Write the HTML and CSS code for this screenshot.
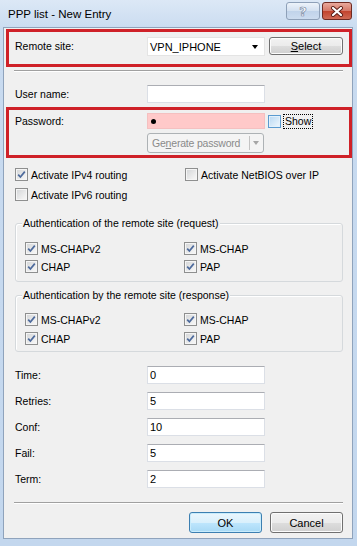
FILE: index.html
```html
<!DOCTYPE html>
<html lang="en">
<head>
    <meta charset="UTF-8">
    <meta name="viewport" content="width=device-width, initial-scale=1.0">
    <title>PPP list - New Entry</title>
    <link rel="stylesheet" href="styles.css">
</head>
<body>
<div class="window">
    <div class="titlebar">
        <span class="title">PPP list - New Entry</span>
        <div class="caption">
            <span class="cap-btn help">?</span>
            <span class="cap-btn close">
                <svg width="14" height="11" viewBox="0 0 14 11">
                    <path d="M3 2 L11 9 M11 2 L3 9" stroke="#5a1d16" stroke-width="4" stroke-linecap="round"/>
                    <path d="M3 2 L11 9 M11 2 L3 9" stroke="#fff" stroke-width="2.2" stroke-linecap="round"/>
                </svg>
            </span>
        </div>
    </div>

    <div class="client">
        <div class="mark mark-site">
            <div class="row">
                <label class="lbl">Remote site:</label>
                <div class="combo"><span>VPN_IPHONE</span><span class="arrow"></span></div>
                <button class="btn btn-select"><u>S</u>elect</button>
            </div>
        </div>

        <div class="sep sep-top"></div>

        <div class="row field user">
            <label class="lbl">User name:</label>
            <div class="input"></div>
        </div>

        <div class="mark mark-pw">
            <div class="row pw">
                <label class="lbl">Password:</label>
                <div class="input input-pw"><span class="dot"></span></div>
                <span class="cb cb-hot"></span>
                <span class="focus">Show</span>
            </div>
            <div class="gen">
                <span class="gen-text">Ge<u>n</u>erate password</span>
                <span class="gen-split"></span>
                <span class="arrow arrow-grey"></span>
            </div>
        </div>

        <div class="checks">
            <div class="chk"><span class="cb on"><svg width="11" height="11" viewBox="0 0 11 11"><path d="M2.2 5.6 L4.4 8 L8.8 2.6" fill="none" stroke="#4d6a9c" stroke-width="1.7"/></svg></span>Activate IPv4 routing</div>
            <div class="chk"><span class="cb"></span>Activate NetBIOS over IP</div>
            <div class="chk"><span class="cb"></span>Activate IPv6 routing</div>
        </div>

        <div class="group group-req">
            <div class="group-title">Authentication of the remote site (request)</div>
            <div class="checks group-checks">
                <div class="chk"><span class="cb on"><svg width="11" height="11" viewBox="0 0 11 11"><path d="M2.2 5.6 L4.4 8 L8.8 2.6" fill="none" stroke="#4d6a9c" stroke-width="1.7"/></svg></span>MS-CHAPv2</div>
                <div class="chk"><span class="cb on"><svg width="11" height="11" viewBox="0 0 11 11"><path d="M2.2 5.6 L4.4 8 L8.8 2.6" fill="none" stroke="#4d6a9c" stroke-width="1.7"/></svg></span>MS-CHAP</div>
                <div class="chk"><span class="cb on"><svg width="11" height="11" viewBox="0 0 11 11"><path d="M2.2 5.6 L4.4 8 L8.8 2.6" fill="none" stroke="#4d6a9c" stroke-width="1.7"/></svg></span>CHAP</div>
                <div class="chk"><span class="cb on"><svg width="11" height="11" viewBox="0 0 11 11"><path d="M2.2 5.6 L4.4 8 L8.8 2.6" fill="none" stroke="#4d6a9c" stroke-width="1.7"/></svg></span>PAP</div>
            </div>
        </div>

        <div class="group group-resp">
            <div class="group-title">Authentication by the remote site (response)</div>
            <div class="checks group-checks">
                <div class="chk"><span class="cb on"><svg width="11" height="11" viewBox="0 0 11 11"><path d="M2.2 5.6 L4.4 8 L8.8 2.6" fill="none" stroke="#4d6a9c" stroke-width="1.7"/></svg></span>MS-CHAPv2</div>
                <div class="chk"><span class="cb on"><svg width="11" height="11" viewBox="0 0 11 11"><path d="M2.2 5.6 L4.4 8 L8.8 2.6" fill="none" stroke="#4d6a9c" stroke-width="1.7"/></svg></span>MS-CHAP</div>
                <div class="chk"><span class="cb on"><svg width="11" height="11" viewBox="0 0 11 11"><path d="M2.2 5.6 L4.4 8 L8.8 2.6" fill="none" stroke="#4d6a9c" stroke-width="1.7"/></svg></span>CHAP</div>
                <div class="chk"><span class="cb on"><svg width="11" height="11" viewBox="0 0 11 11"><path d="M2.2 5.6 L4.4 8 L8.8 2.6" fill="none" stroke="#4d6a9c" stroke-width="1.7"/></svg></span>PAP</div>
            </div>
        </div>

        <div class="timers">
            <div class="row field"><label class="lbl">Time:</label><div class="input">0</div></div>
            <div class="row field"><label class="lbl">Retries:</label><div class="input">5</div></div>
            <div class="row field"><label class="lbl">Conf:</label><div class="input">10</div></div>
            <div class="row field"><label class="lbl">Fail:</label><div class="input">5</div></div>
            <div class="row field"><label class="lbl">Term:</label><div class="input">2</div></div>
        </div>

        <div class="sep sep-bottom"></div>

        <div class="actions">
            <button class="btn btn-default">OK</button>
            <button class="btn">Cancel</button>
        </div>
    </div>
</div>
</body>
</html>
```

FILE: styles.css
```css
body {
    margin: 0;
    font-family: "Liberation Sans", Arial, sans-serif;
    font-size: 10.5px;
    color: #000;
    background: #c8daef;
}
.window {
    width: 357px;
    height: 546px;
    display: flex;
    flex-direction: column;
    background: linear-gradient(#dce8f6, #c9dbf0 30px, #c3d7ee);
}
.titlebar {
    height: 27px;
    flex: none;
    display: flex;
    justify-content: space-between;
    align-items: flex-start;
    padding: 0 5px 0 8px;
}
.title {
    font-size: 11.5px;
    line-height: 14px;
    padding-top: 7px;
}
.caption {
    display: flex;
    gap: 2px;
    margin-top: 2px;
}
.cap-btn {
    height: 18px;
    box-sizing: border-box;
    border-radius: 3px;
    display: flex;
    align-items: center;
    justify-content: center;
}
.help {
    width: 34px;
    border: 1px solid #8ea0b8;
    background: linear-gradient(#edf3fa, #d3e0f0 50%, #c0d3ea 51%, #ccdcef);
    color: #fff;
    font: bold 13px "DejaVu Sans", sans-serif;
    -webkit-text-stroke: 0.7px #7d8ea6;
}
.close {
    width: 30px;
    border: 1px solid #6e2a22;
    background: linear-gradient(#e9a99c, #d47767 50%, #c2432d 51%, #cf6a55);
}
.client {
    height: 512px;
    box-sizing: border-box;
    margin: 0 4px 0 3px;
    border: 1px solid #8fa3bc;
    background: #f0f0f0;
}
.mark {
    border: 3px solid #cf2128;
    margin-left: 2px;
    box-sizing: border-box;
}
.mark-site {
    margin-top: 1px;
    height: 38px;
}
.mark-site .row {
    padding: 5px 0 0 6px;
    align-items: flex-start;
}
.mark-site .lbl {
    line-height: 19px;
}
.row {
    display: flex;
    align-items: center;
}
.lbl {
    width: 132px;
    flex: none;
}
.field {
    padding-left: 11px;
    height: 18px;
}
.combo {
    width: 118px;
    height: 19px;
    box-sizing: border-box;
    background: #fff;
    border: 1px solid #e4e4e4;
    display: flex;
    align-items: center;
    justify-content: space-between;
    padding: 0 6px 0 2px;
    font-size: 11px;
}
.arrow {
    width: 0;
    height: 0;
    border-left: 3.5px solid transparent;
    border-right: 3.5px solid transparent;
    border-top: 4px solid #000;
}
.arrow-grey {
    border-top-color: #a6a6a6;
}
.btn {
    font: inherit;
    font-size: 11px;
    color: #000;
    width: 73px;
    height: 21px;
    padding: 0;
    border: 1px solid #707070;
    border-radius: 3px;
    background: linear-gradient(#f2f2f2, #ebebeb 50%, #dddddd 51%, #cfcfcf);
    box-shadow: inset 0 0 0 1px #fcfcfc;
}
.btn-select {
    width: 74px;
    height: 18px;
    margin-left: 4px;
}
.btn-default {
    border-color: #3c7fb1;
    background: linear-gradient(#eaf6fd, #d9f0fc 50%, #bee6fd 51%, #a7d9f5);
    box-shadow: inset 0 0 0 1px #c8ecfc;
}
.sep {
    border-top: 1px solid #a0a0a0;
    border-bottom: 1px solid #fff;
    margin-left: 10px;
    margin-right: 9px;
}
.sep-top {
    margin-top: 3px;
}
.user {
    margin-top: 13px;
}
.input {
    width: 118px;
    height: 18px;
    box-sizing: border-box;
    background: #fff;
    border: 1px solid #dbdfe6;
    border-top-color: #abadb3;
    padding-left: 2px;
    font-size: 11px;
    line-height: 16px;
    display: flex;
    align-items: center;
}
.mark-pw {
    margin-top: 4px;
    padding: 3px 0 2px 6px;
}
.pw {
    height: 16px;
}
.input-pw {
    height: 16px;
    background: #ffc9c9;
    border-color: #f4c0c0;
}
.dot {
    width: 5px;
    height: 5px;
    border-radius: 50%;
    background: #000;
    margin-left: 1px;
}
.focus {
    margin-left: 3px;
    outline: 1px dotted #000;
    outline-offset: 0;
    line-height: 13px;
    padding: 0 1px;
}
.gen {
    margin: 4px 0 0 132px;
    width: 117px;
    height: 20px;
    box-sizing: border-box;
    border: 1px solid #adb2b5;
    border-radius: 3px;
    background: #f4f4f4;
    display: flex;
    align-items: center;
    color: #8a8a8a;
    font-size: 10.5px;
    padding-left: 4px;
}
.gen-text {
    flex: 1;
    white-space: nowrap;
    letter-spacing: -0.2px;
}
.gen-split {
    width: 1px;
    height: 14px;
    background: #c3c3c3;
    margin-right: 3px;
}
.gen .arrow {
    margin-right: 4px;
}
.checks {
    display: grid;
    grid-template-columns: 170px auto;
    row-gap: 7px;
    padding-left: 11px;
    margin-top: 10px;
}
.chk {
    display: flex;
    align-items: center;
    gap: 3px;
    height: 13px;
    white-space: nowrap;
}
.cb {
    width: 13px;
    height: 13px;
    box-sizing: border-box;
    flex: none;
    border: 1px solid #8e8f8f;
    background: linear-gradient(135deg, #d2d4d6, #f3f3f3 80%);
    box-shadow: inset 0 0 0 1px #f5f5f5;
    display: flex;
    align-items: center;
    justify-content: center;
}
.cb svg {
    display: block;
}
.cb-hot {
    margin-left: 3px;
    border-color: #5b9bd0;
    background: linear-gradient(135deg, #b7d7f2, #e8f3fc 85%);
    box-shadow: inset 0 0 0 1px #e3f1fc;
}
.group {
    margin-left: 11px;
    margin-right: 9px;
    border: 1px solid #d5d9dc;
    border-radius: 3px;
    box-shadow: inset 1px 1px 0 #fff;
}
.group-req {
    margin-top: 22px;
    padding-bottom: 8px;
}
.group-resp {
    margin-top: 13px;
    padding-bottom: 6px;
}
.group-title {
    margin: -7px 0 0 6px;
    line-height: 13px;
    padding: 0 1px;
    background: #f0f0f0;
    width: fit-content;
}
.group-checks {
    grid-template-columns: 159px auto;
    padding-left: 9px;
}
.group-req .group-checks {
    margin-top: 12px;
    row-gap: 5px;
}
.group-resp .group-checks {
    margin-top: 11px;
    row-gap: 6px;
}
.timers {
    margin-top: 14px;
    display: flex;
    flex-direction: column;
    gap: 8px;
}
.sep-bottom {
    margin-top: 14px;
}
.actions {
    margin: 8px 9px 0 0;
    display: flex;
    justify-content: flex-end;
    gap: 8px;
}
```
